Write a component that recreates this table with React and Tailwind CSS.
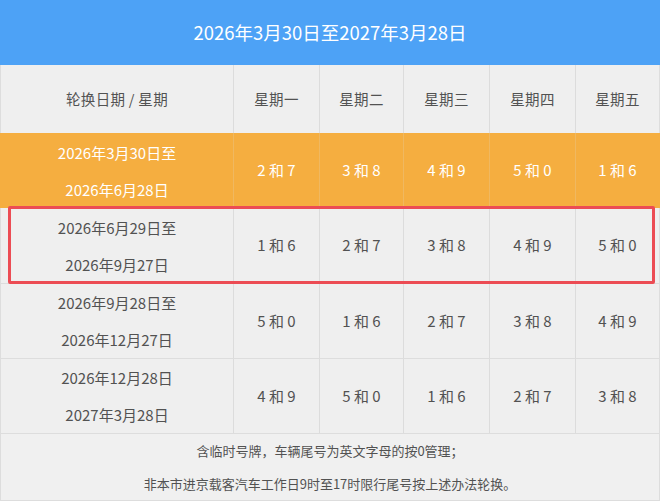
import React from "react";

const cols = "grid grid-cols-[233px_86px_84px_86px_86px_1fr]";
const font = { fontFamily: '"Noto Sans CJK SC", "Noto Sans", sans-serif' };

const rows = [
  { a: "2026年3月30日至", b: "2026年6月28日", v: ["2 和 7", "3 和 8", "4 和 9", "5 和 0", "1 和 6"], orange: true, h: "h-[75px]" },
  { a: "2026年6月29日至", b: "2026年9月27日", v: ["1 和 6", "2 和 7", "3 和 8", "4 和 9", "5 和 0"], red: true, h: "h-[76px]" },
  { a: "2026年9月28日至", b: "2026年12月27日", v: ["5 和 0", "1 和 6", "2 和 7", "3 和 8", "4 和 9"], h: "h-[75px]" },
  { a: "2026年12月28日", b: "2027年3月28日", v: ["4 和 9", "5 和 0", "1 和 6", "2 和 7", "3 和 8"], h: "h-[75px]" },
];

export default function App() {
  return (
    <div className="w-[660px] h-[504px] bg-white overflow-hidden" style={font}>
      <div className="h-[65px] bg-[#4da2f6] flex items-center justify-center text-white text-[18.5px]">
        2026年3月30日至2027年3月28日
      </div>
      <div className={`${cols} h-[68px] bg-[#efefef] border-x border-[#dddddd] text-[#525252] text-[14.5px]`}>
        {["轮换日期 / 星期", "星期一", "星期二", "星期三", "星期四", "星期五"].map((t, i) => (
          <div key={i} className={`flex items-center justify-center tracking-[0.3px] ${i < 5 ? "border-r border-[#dcdcdc]" : ""}`}>
            {t}
          </div>
        ))}
      </div>
      {rows.map((r, ri) => (
        <div
          key={ri}
          className={`relative ${cols} ${r.h} border-x ${r.orange ? "bg-[#f5ae40] text-white border-[#f5ae40]" : "bg-[#efefef] text-[#525252] border-[#dddddd] border-b"} text-[15px]`}
        >
          <div className={`flex flex-col items-center justify-center leading-[37px] border-r ${r.orange ? "border-[#f0b860]" : "border-[#dcdcdc]"}`}>
            <div>{r.a}</div>
            <div>{r.b}</div>
          </div>
          {r.v.map((v, i) => (
            <div
              key={i}
              className={`flex items-center justify-center whitespace-pre ${i < 4 ? (r.orange ? "border-r border-[#f0b860]" : "border-r border-[#dcdcdc]") : ""}`}
            >
              {v}
            </div>
          ))}
          {r.red && (
            <div className="absolute left-[7px] right-[4px] top-[-2px] bottom-[-1px] border-[3px] border-[#ec4c54] rounded-[2px] pointer-events-none" />
          )}
        </div>
      ))}
      <div className="h-[67px] bg-[#f0f0f0] border-x border-b border-[#dddddd] flex flex-col items-center justify-center text-[13px] text-[#525252] leading-[33px]">
        <div>含临时号牌，车辆尾号为英文字母的按0管理；</div>
        <div>非本市进京载客汽车工作日9时至17时限行尾号按上述办法轮换。</div>
      </div>
    </div>
  );
}
